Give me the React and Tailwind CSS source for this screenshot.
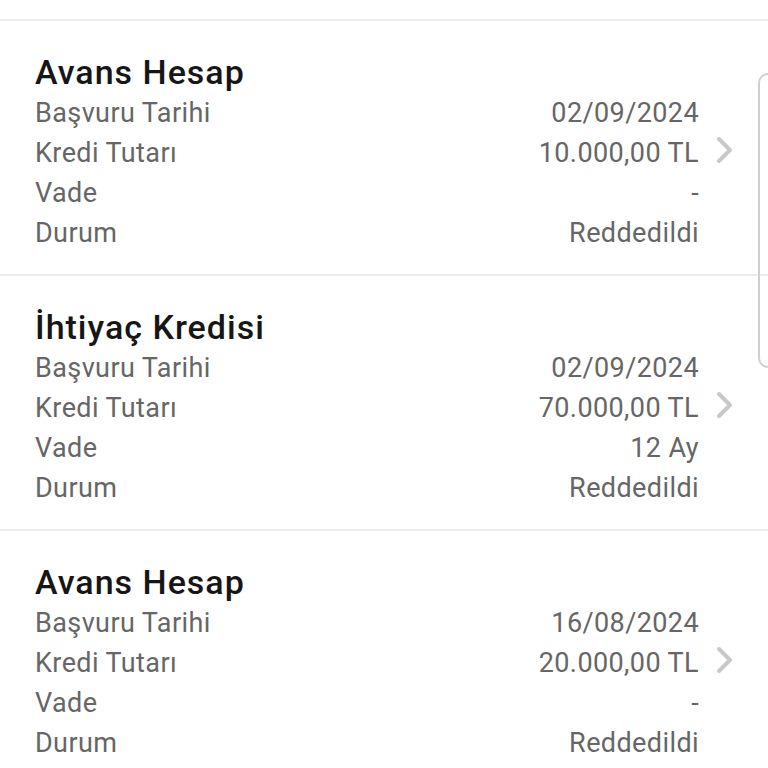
import React from "react";

const applications = [
  { title: "Avans Hesap", date: "02/09/2024", amount: "10.000,00 TL", term: "-", status: "Reddedildi" },
  { title: "İhtiyaç Kredisi", date: "02/09/2024", amount: "70.000,00 TL", term: "12 Ay", status: "Reddedildi" },
  { title: "Avans Hesap", date: "16/08/2024", amount: "20.000,00 TL", term: "-", status: "Reddedildi" },
];

const Row = ({ label, value }) => (
  <div className="flex items-center justify-between h-[40px] text-[27px] tracking-[0.4px] text-[#666666] leading-none">
    <span>{label}</span>
    <span>{value}</span>
  </div>
);

const App = () => {
  return (
    <div className="relative w-[768px] h-[768px] overflow-hidden bg-white" style={{ fontFamily: "Roboto, 'Noto Sans', sans-serif" }}>
      <div className="h-[19px]" />
      {applications.map((app, i) => (
        <div key={i} className="flex items-center border-t-2 border-[#ededed] pl-[35px] pr-[34px] pt-[33px] pb-[21px]">
          <div className="flex-1">
            <div className="h-[36px] flex items-center text-[34px] font-medium tracking-[1px] text-[#161616] leading-none">{app.title}</div>
            <div className="mt-[3px]">
              <Row label="Başvuru Tarihi" value={app.date} />
              <Row label="Kredi Tutarı" value={app.amount} />
              <Row label="Vade" value={app.term} />
              <Row label="Durum" value={app.status} />
            </div>
          </div>
          <svg width="20" height="28" viewBox="0 0 20 28" className="ml-[15px] mb-[8px]">
            <path d="M5 3 L16 14 L5 25" fill="none" stroke="#c8c8c8" strokeWidth="4" strokeLinecap="round" strokeLinejoin="round" />
          </svg>
        </div>
      ))}
      <div className="absolute left-[758px] top-[73px] w-[20px] h-[295px] border-2 border-[#cfcfcf] rounded-l-[10px]" />
    </div>
  );
};

export default App;
